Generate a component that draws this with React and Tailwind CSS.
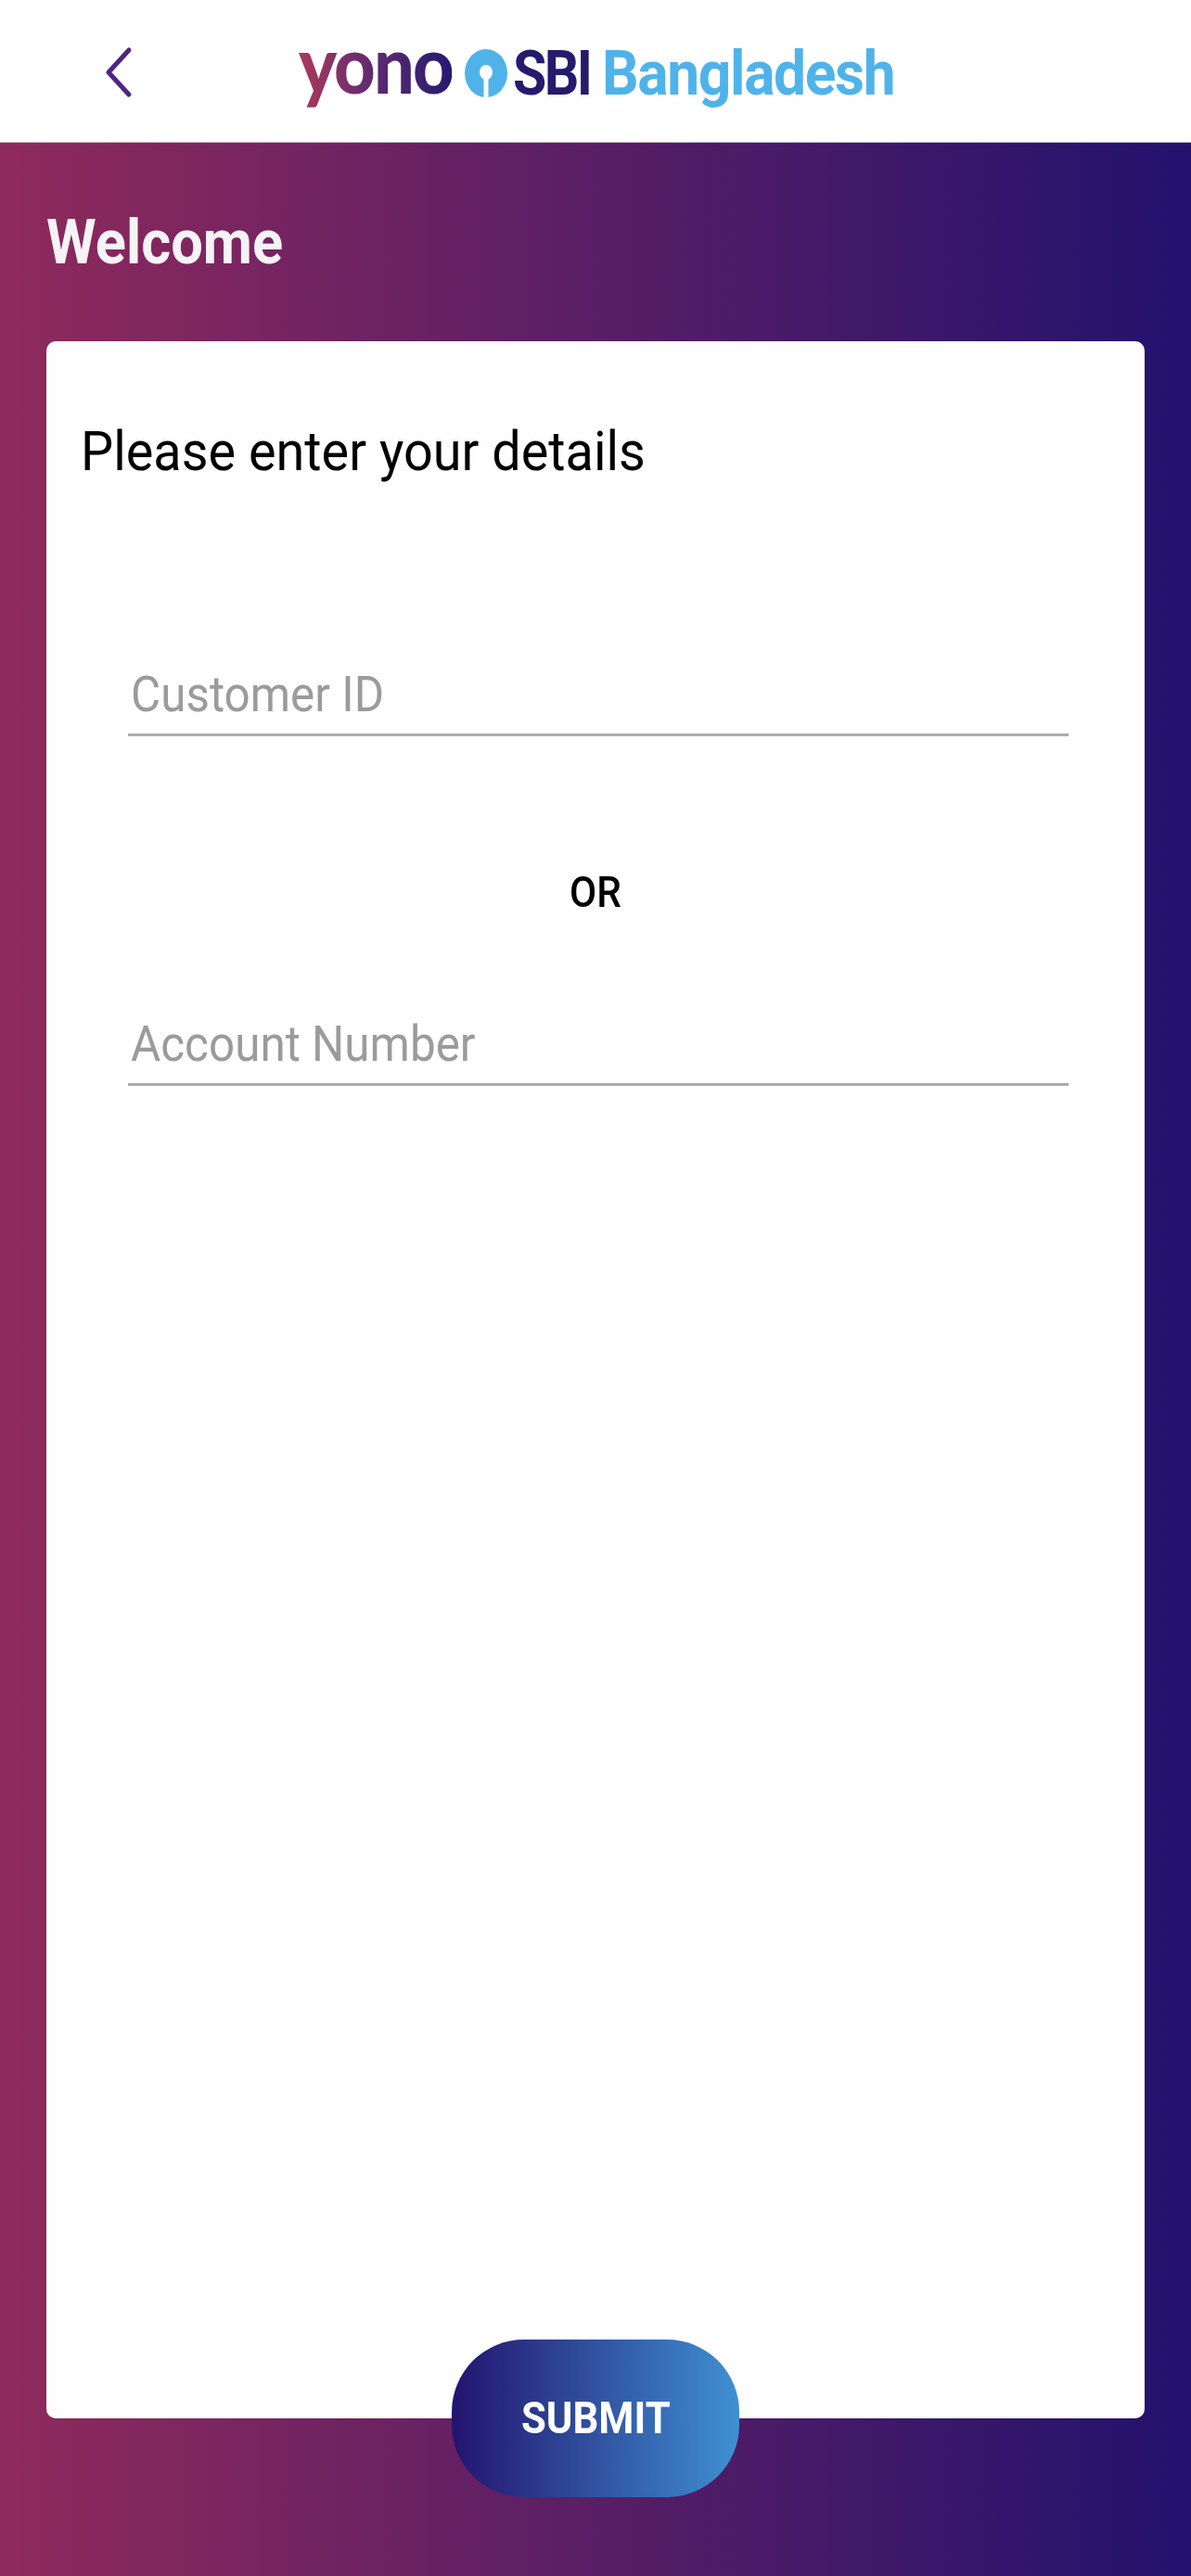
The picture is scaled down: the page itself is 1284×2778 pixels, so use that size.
const Field = ({ label, className = '' }) => (
    <div className={`-mr-[6px] h-[71px] border-b-[3px] border-[#ababab] pl-[3px] text-[54px] leading-[52px] text-[#9b9b9b] ${className}`}>
        <span className="inline-block origin-left scale-x-[.915] whitespace-nowrap">{label}</span>
    </div>
);

const SbiMark = () => (
    <svg width="46" height="52" viewBox="0 0 46 52" className="mt-[1px] ml-[12px] shrink-0">
        <ellipse cx="23" cy="26" rx="23" ry="26" fill="#4fb3ea" />
        <ellipse cx="23" cy="25" rx="7" ry="8" fill="#fff" />
        <rect x="20.5" y="28" width="5" height="24" fill="#fff" />
    </svg>
);

const App = () => {
    return (
        <div className="flex h-[2778px] flex-col bg-white font-['Roboto',sans-serif]">
            <header className="flex h-[154px] shrink-0 items-start border-b border-[#b9b3bd] bg-white pl-[112px]">
                <svg width="32" height="56" viewBox="0 0 32 56" fill="none" className="mt-[50px] shrink-0">
                    <path d="M27 4 L5 28 L27 52" stroke="#4f2583" strokeWidth="5" strokeLinecap="round" strokeLinejoin="round" />
                </svg>
                <div className="ml-[178px] flex items-start pt-[52px]">
                    <span className="-mt-[37px] w-[167px] shrink-0">
                        <span className="inline-block origin-left scale-x-[.9] bg-linear-to-r/srgb from-[#ab3a5a] via-[#5c2a72] to-[#261a6e] bg-clip-text font-['Lato',sans-serif] text-[86px] leading-[106px] font-black tracking-[-2px] text-transparent">
                            yono
                        </span>
                    </span>
                    <SbiMark />
                    <span className="ml-[6px] w-[80px] shrink-0">
                        <span className="inline-block origin-left scale-x-[.88] text-[67px] leading-[54px] font-bold tracking-[-3px] text-[#261a6e]">SBI</span>
                    </span>
                    <span className="ml-[16px] shrink-0">
                        <span className="inline-block origin-left scale-x-[.93] text-[67px] leading-[54px] font-bold tracking-[-1.5px] whitespace-nowrap text-[#4fb3ea]">Bangladesh</span>
                    </span>
                </div>
            </header>

            <main className="flex flex-1 flex-col bg-linear-to-r/srgb from-[#8f2a5c] to-[#22126e] px-[50px]">
                <h1 className="flex h-[214px] shrink-0 items-start pt-[73px] text-[66px] leading-[70px] font-bold text-[#f5f3f5]">
                    <span className="inline-block origin-left scale-x-[.93]">Welcome</span>
                </h1>

                <section className="flex h-[2240px] shrink-0 flex-col rounded-[10px] bg-[#fefefe] pt-[84px]">
                    <p className="pl-[37px] text-[60px] leading-[70px] text-black">
                        <span className="inline-block origin-left scale-x-[.93] whitespace-nowrap">Please enter your details</span>
                    </p>
                    <div className="mt-[201px] flex flex-col px-[88px]">
                        <Field label="Customer ID" />
                        <p className="mt-[142px] text-center text-[47px] leading-[52px] font-medium text-black">
                            <span className="inline-block scale-x-[.9]">OR</span>
                        </p>
                        <Field label="Account Number" className="mt-[112px]" />
                    </div>
                </section>

                <button className="relative z-10 mx-auto -mt-[85px] flex h-[170px] w-[310px] items-center justify-center rounded-[78px] bg-linear-to-r/srgb from-[#23146e] to-[#3f90d2] text-[49px] font-bold text-white">
                    <span className="inline-block scale-x-[.89]">SUBMIT</span>
                </button>
            </main>
        </div>
    );
};

export default App;
